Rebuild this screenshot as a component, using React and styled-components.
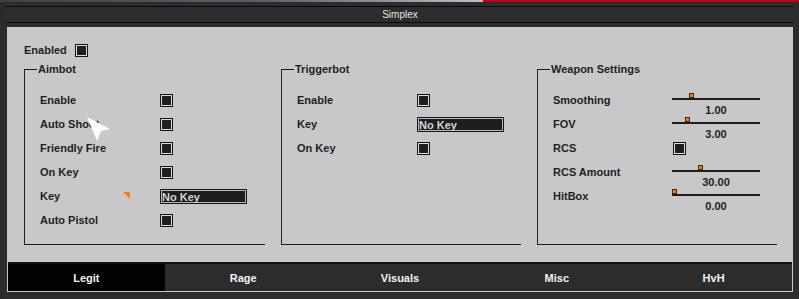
import React from 'react';
import styled, { createGlobalStyle } from 'styled-components';

const colors = {
  FRAME: '#2c2c2c',
  LINE: '#0c0c0c',
  PANEL: '#c8c8c8',
  TEXT: '#1f1f1f',
  DARK: '#1e1e1e',
  ORANGE: '#f0821c',
};

const aimbot = [
  { label: 'Enable', type: 'check' },
  { label: 'Auto Shoot', type: 'check' },
  { label: 'Friendly Fire', type: 'check' },
  { label: 'On Key', type: 'check' },
  { label: 'Key', type: 'key', marker: true },
  { label: 'Auto Pistol', type: 'check' },
];

const triggerbot = [
  { label: 'Enable', type: 'check' },
  { label: 'Key', type: 'key' },
  { label: 'On Key', type: 'check' },
];

const weapon = [
  { label: 'Smoothing', type: 'slider', pos: 17, value: '1.00' },
  { label: 'FOV', type: 'slider', pos: 13, value: '3.00' },
  { label: 'RCS', type: 'check' },
  { label: 'RCS Amount', type: 'slider', pos: 26, value: '30.00' },
  { label: 'HitBox', type: 'slider', pos: 0, value: '0.00' },
];

const groups = [
  { title: 'Aimbot', rows: aimbot },
  { title: 'Triggerbot', rows: triggerbot },
  { title: 'Weapon Settings', rows: weapon },
];

const tabs = ['Legit', 'Rage', 'Visuals', 'Misc', 'HvH'];

const Control = ({ row }) => {
  if (row.type === 'check') return <Check />;
  if (row.type === 'key') return <KeyBox>No Key</KeyBox>;
  return (
    <Slider>
      <HandleLane>
        <Handle $pos={row.pos} />
      </HandleLane>
      <Track />
      <SliderValue>{row.value}</SliderValue>
    </Slider>
  );
};

export default function App() {
  return (
    <Root>
      <GlobalStyle />
      <TopStrip>
        <StripLeft />
        <StripRed />
      </TopStrip>
      <Body>
        <SideStrip />
        <Main>
          <TitleBar>Simplex</TitleBar>
          <Panel>
            <Content>
              <EnabledRow>
                Enabled
                <Check />
              </EnabledRow>
              <Groups>
                {groups.map((g) => (
                  <GroupBox key={g.title}>
                    <GroupHeader>
                      <Tick />
                      <GroupTitle>{g.title}</GroupTitle>
                    </GroupHeader>
                    <Rows>
                      {g.rows.map((row) => (
                        <Row key={row.label}>
                          <Label>
                            {row.label}
                            {row.marker && <Marker />}
                          </Label>
                          <Control row={row} />
                        </Row>
                      ))}
                    </Rows>
                  </GroupBox>
                ))}
              </Groups>
            </Content>
            <TabBar>
              {tabs.map((t, i) => (
                <Tab key={t} $active={i === 0}>
                  {t}
                </Tab>
              ))}
            </TabBar>
          </Panel>
        </Main>
      </Body>
      <Cursor width="26" height="26" viewBox="0 0 26 26">
        <polygon points="0,0 23,12 14,14 10,24" fill="#fff" />
      </Cursor>
    </Root>
  );
}

const GlobalStyle = createGlobalStyle`
  body {
    margin: 0;
    background: ${colors.FRAME};
    font-family: "Liberation Sans", Arial, sans-serif;
  }
`;

const Root = styled.div`
  display: flex;
  flex-direction: column;
  height: 299px;
  position: relative;
  overflow: hidden;
  background: ${colors.FRAME};
`;

const TopStrip = styled.div`
  display: flex;
  height: 2px;
`;

const StripLeft = styled.div`
  width: 483px;
  background: linear-gradient(90deg, #3c4248 0%, #5a6067 55%, #b9c0c7 100%);
`;

const StripRed = styled.div`
  flex: 1;
  background: #c4000a;
`;

const Body = styled.div`
  display: flex;
  flex: 1;
`;

const SideStrip = styled.div`
  width: 5px;
  background: #282c30;
`;

const Main = styled.div`
  flex: 1;
  display: flex;
  flex-direction: column;
  padding-right: 6px;
`;

const TitleBar = styled.div`
  margin: 4px 0 0 1px;
  height: 15px;
  border-top: 1px solid ${colors.LINE};
  border-bottom: 1px solid ${colors.LINE};
  display: flex;
  align-items: center;
  justify-content: center;
  padding-left: 1px;
  color: #e4e4e4;
  font-size: 10px;
`;

const Panel = styled.div`
  margin: 4px 0 0 2px;
  height: 265px;
  background: ${colors.PANEL};
  display: flex;
  flex-direction: column;
  padding: 0 1px 1px;
  box-sizing: border-box;
`;

const Content = styled.div`
  flex: 1;
  padding: 16px 15px 0 16px;
`;

const EnabledRow = styled.div`
  display: flex;
  align-items: center;
  gap: 8px;
  height: 14px;
  color: ${colors.TEXT};
  font-size: 11px;
  font-weight: bold;
`;

const Groups = styled.div`
  display: grid;
  grid-template-columns: 241px 240px 240px;
  column-gap: 16px;
  margin-top: 12px;
`;

const GroupBox = styled.div`
  height: 176px;
  border-left: 1px solid ${colors.DARK};
  border-bottom: 1px solid ${colors.DARK};
  box-sizing: border-box;
`;

const GroupHeader = styled.div`
  display: flex;
  align-items: center;
  height: 14px;
  margin: -7px 0 0 -1px;
`;

const Tick = styled.div`
  width: 13px;
  height: 1px;
  background: ${colors.DARK};
`;

const GroupTitle = styled.span`
  padding-left: 1px;
  color: ${colors.TEXT};
  font-size: 11px;
  font-weight: bold;
`;

const Rows = styled.div`
  display: flex;
  flex-direction: column;
  margin-top: 12px;
  padding-left: 15px;
`;

const Row = styled.div`
  display: flex;
  align-items: center;
  height: 24px;
`;

const Label = styled.div`
  width: 120px;
  display: flex;
  align-items: center;
  color: ${colors.TEXT};
  font-size: 11px;
  font-weight: bold;
`;

const Marker = styled.span`
  width: 0;
  height: 0;
  margin: -1px 30px 0 auto;
  border-top: 7px solid ${colors.ORANGE};
  border-left: 7px solid transparent;
`;

const Check = styled.span`
  display: block;
  width: 13px;
  height: 13px;
  box-sizing: border-box;
  border: 1px solid #161616;
  box-shadow: inset 0 0 0 1px #dcdcdc;
  background: ${colors.DARK};
`;

const KeyBox = styled.div`
  width: 87px;
  height: 15px;
  box-sizing: border-box;
  border: 1px solid #161616;
  box-shadow: inset 0 0 0 1px #b8b8b8;
  background: ${colors.DARK};
  color: #d4d4d4;
  font-size: 11px;
  font-weight: bold;
  line-height: 15px;
  padding-left: 1px;
  overflow: hidden;
`;

const Slider = styled.div`
  align-self: flex-start;
  margin: 5px 0 0 -1px;
  width: 88px;
  display: flex;
  flex-direction: column;
`;

const HandleLane = styled.div`
  height: 5px;
`;

const Handle = styled.div`
  width: 5px;
  height: 5px;
  margin-left: ${({ $pos }) => $pos}px;
  box-sizing: border-box;
  border: 1px solid #4a2400;
  background: ${colors.ORANGE};
`;

const Track = styled.div`
  height: 2px;
  background: ${colors.DARK};
`;

const SliderValue = styled.div`
  margin-top: 4px;
  text-align: center;
  color: ${colors.TEXT};
  font-size: 11px;
  font-weight: bold;
  line-height: 12px;
`;

const TabBar = styled.div`
  display: flex;
  height: 27px;
  border-top: 2px solid #0e0e0e;
`;

const Tab = styled.div`
  flex: 1;
  display: flex;
  align-items: center;
  justify-content: center;
  background: ${({ $active }) => ($active ? '#030303' : colors.FRAME)};
  color: #f2f2f2;
  font-size: 11px;
  font-weight: bold;
`;

const Cursor = styled.svg`
  position: absolute;
  left: 87px;
  top: 117px;
`;
